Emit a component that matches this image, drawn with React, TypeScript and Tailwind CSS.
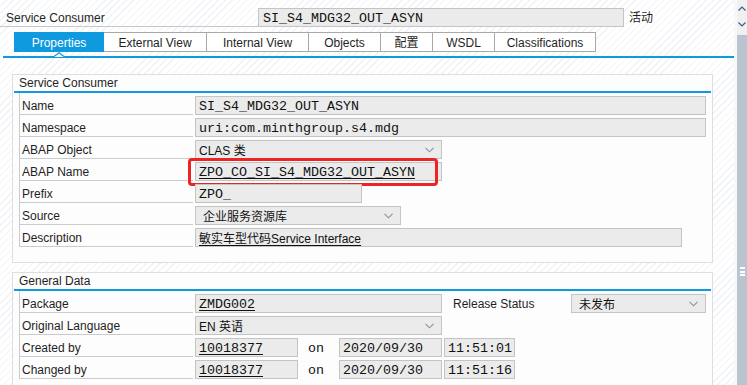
import React from "react";

const SANS = "font-['Liberation_Sans',Arial,'Noto_Sans_CJK_SC',sans-serif] text-[12px]";
const MONO = "font-['Liberation_Mono','Courier_New','Noto_Sans_CJK_SC',monospace] text-[13.33px]";
const BLUE = "bg-[#0f9ae0]";

function Chevron() {
  return (
    <svg
      width="9"
      height="6"
      viewBox="0 0 9 6"
      className="absolute right-[7px] top-[6px]"
    >
      <polyline points="0.5,0.8 4.5,4.8 8.5,0.8" fill="none" stroke="#8a929a" strokeWidth="1.1" />
    </svg>
  );
}

function Field({
  className,
  children,
  dropdown,
}: {
  className: string;
  children?: React.ReactNode;
  dropdown?: boolean;
}) {
  return (
    <div
      className={
        "relative mt-[3px] h-[19px] shrink-0 border border-[#c4c4c4] bg-[#ebebeb] pl-[3px] pt-[2px] flex items-center whitespace-nowrap text-[#111] " +
        className
      }
    >
      {children}
      {dropdown && <Chevron />}
    </div>
  );
}

function Row({ label, children }: { label: string; children?: React.ReactNode }) {
  return (
    <div className="flex h-[22px] gap-[2px]">
      <div className={"w-[174px] h-full shrink-0 border-l border-b border-[#cbcbcb] pl-[2px] pt-[4px] leading-[18px] text-[#1f1f1f] " + SANS}>
        {label}
      </div>
      {children}
    </div>
  );
}

function Panel({
  title,
  children,
  className,
}: {
  title: string;
  children?: React.ReactNode;
  className: string;
}) {
  return (
    <div className={"ml-[12px] w-[701px] border border-[#dedede] bg-[#fdfdfd] " + className}>
      <div className={"h-[16px] pt-[1px] leading-[15px] pl-[6px] text-[#1f1f1f] " + SANS}>{title}</div>
      <div className={"mx-[1px] h-[2px] " + BLUE} />
      <div className="pl-[6px]">{children}</div>
    </div>
  );
}

const tabs: [string, string][] = [
  ["Properties", "w-[90px]"],
  ["External View", "w-[103px]"],
  ["Internal View", "w-[102px]"],
  ["Objects", "w-[72px]"],
  ["配置", "w-[52px]"],
  ["WSDL", "w-[62px]"],
  ["Classifications", "w-[101px]"],
];

export default function App() {
  return (
    <div className="flex w-[747px] h-[385px] overflow-hidden bg-white">
      <div className="relative w-[734px] h-full bg-[image:repeating-linear-gradient(135deg,#ffffff_0px,#ffffff_4px,#eff3f7_4px,#eff3f7_5px)]">
        {/* header */}
        <div className="flex items-end h-[19px] mt-[8px]">
          <div className={"w-[258px] h-[19px] border-b border-[#c8c8c8] pl-[6px] pt-[1px] leading-[18px] text-[#1f1f1f] " + SANS}>
            Service Consumer
          </div>
          <div className={"w-[366px] h-[19px] border border-[#c4c4c4] bg-[#ebebeb] pl-[4px] pt-[2px] flex items-center text-[#111] " + MONO}>
            SI_S4_MDG32_OUT_ASYN
          </div>
          <div className={"ml-[5px] h-[19px] pt-[1px] leading-[18px] text-[#1f1f1f] " + SANS}>活动</div>
        </div>

        {/* tabs */}
        <div className="flex mt-[5px] ml-[14px] h-[20px]">
          {tabs.map(([t, w], i) =>
            i === 0 ? (
              <div
                key={t}
                className={"h-full pt-[1px] flex items-center justify-center text-white " + BLUE + " " + w + " " + SANS}
              >
                {t}
              </div>
            ) : (
              <div
                key={t}
                className={"h-full pt-[1px] flex items-center justify-center border-t border-b border-r border-[#a9a9a9] bg-white text-[#1f1f1f] " + w + " " + SANS}
              >
                {t}
              </div>
            )
          )}
        </div>

        {/* blue line with notch */}
        <div className="relative mt-[4px] ml-[3px] w-[731px] h-[2px]">
          <div className={"h-full " + BLUE} />
          <svg width="12" height="6" viewBox="0 0 12 6" className="absolute left-[50px] top-[-4px]">
            <polygon points="0,5 6,0.5 12,5" fill="#ffffff" />
            <polyline points="0,5.2 6,0.8 12,5.2" fill="none" stroke="#0f9ae0" strokeWidth="1.3" />
          </svg>
        </div>

        {/* Service Consumer panel */}
        <Panel title="Service Consumer" className="mt-[16px] pb-[15px]">
          <Row label="Name">
            <Field className={"w-[511px] " + MONO}>SI_S4_MDG32_OUT_ASYN</Field>
          </Row>
          <Row label="Namespace">
            <Field className={"w-[511px] " + MONO}>uri:com.minthgroup.s4.mdg</Field>
          </Row>
          <Row label="ABAP Object">
            <Field className={"w-[247px] " + SANS} dropdown>
              CLAS 类
            </Field>
          </Row>
          <Row label="ABAP Name">
            <Field className={"w-[247px] " + MONO}>
              <span className="underline underline-offset-[2px]">ZPO_CO_SI_S4_MDG32_OUT_ASYN</span>
              <div className="absolute left-[-8px] top-[-5px] w-[250px] h-[28px] border-[3px] border-[#ec2424] rounded-[4px]" />
            </Field>
          </Row>
          <Row label="Prefix">
            <Field className={"w-[167px] " + MONO}>ZPO_</Field>
          </Row>
          <Row label="Source">
            <Field className={"w-[206px] " + SANS} dropdown>
              <span className="ml-[4px]">企业服务资源库</span>
            </Field>
          </Row>
          <Row label="Description">
            <Field className={"w-[487px] " + SANS}>
              <span className="underline underline-offset-[2px]">敏实车型代码Service Interface</span>
            </Field>
          </Row>
        </Panel>

        {/* General Data panel */}
        <Panel title="General Data" className="mt-[9px] pb-[20px]">
          <Row label="Package">
            <Field className={"w-[247px] " + MONO}>
              <span className="underline underline-offset-[2px]">ZMDG002</span>
            </Field>
            <div className={"ml-[9px] w-[116px] pt-[4px] leading-[18px] text-[#1f1f1f] " + SANS}>Release Status</div>
            <Field className={"w-[135px] " + SANS} dropdown>
              <span className="ml-[4px]">未发布</span>
            </Field>
          </Row>
          <Row label="Original Language">
            <Field className={"w-[247px] " + SANS} dropdown>
              EN 英语
            </Field>
          </Row>
          <Row label="Created by">
            <Field className={"w-[103px] " + MONO}>
              <span className="underline underline-offset-[2px]">10018377</span>
            </Field>
            <div className={"w-[37px] pl-[8px] pt-[5px] leading-[18px] text-[#111] " + MONO}>on</div>
            <Field className={"w-[103px] " + MONO}>2020/09/30</Field>
            <Field className={"w-[71px] " + MONO}>11:51:01</Field>
          </Row>
          <Row label="Changed by">
            <Field className={"w-[103px] " + MONO}>
              <span className="underline underline-offset-[2px]">10018377</span>
            </Field>
            <div className={"w-[37px] pl-[8px] pt-[5px] leading-[18px] text-[#111] " + MONO}>on</div>
            <Field className={"w-[103px] " + MONO}>2020/09/30</Field>
            <Field className={"w-[71px] " + MONO}>11:51:16</Field>
          </Row>
        </Panel>
      </div>

      {/* scrollbar */}
      <div className="w-[13px] h-full bg-[#f7f8f9] pl-[3px] flex flex-col">
        <div className="h-[35px] bg-[#f0f0f0] flex flex-col items-center pt-[6px] gap-[11px]">
          <svg width="8" height="5" viewBox="0 0 8 5">
            <polyline points="0.5,4.5 4,1 7.5,4.5" fill="none" stroke="#2d5f90" strokeWidth="1.2" />
          </svg>
          <svg width="8" height="5" viewBox="0 0 8 5">
            <polyline points="0.5,0.5 4,4 7.5,0.5" fill="none" stroke="#2d5f90" strokeWidth="1.2" />
          </svg>
        </div>
        <div className="flex-1 bg-[#b9c4ce] pt-[232px] flex flex-col items-center gap-[1.5px]">
          <div className="w-[5px] h-[2px] bg-white" />
          <div className="w-[5px] h-[2px] bg-white" />
          <div className="w-[5px] h-[2px] bg-white" />
        </div>
      </div>
    </div>
  );
}
